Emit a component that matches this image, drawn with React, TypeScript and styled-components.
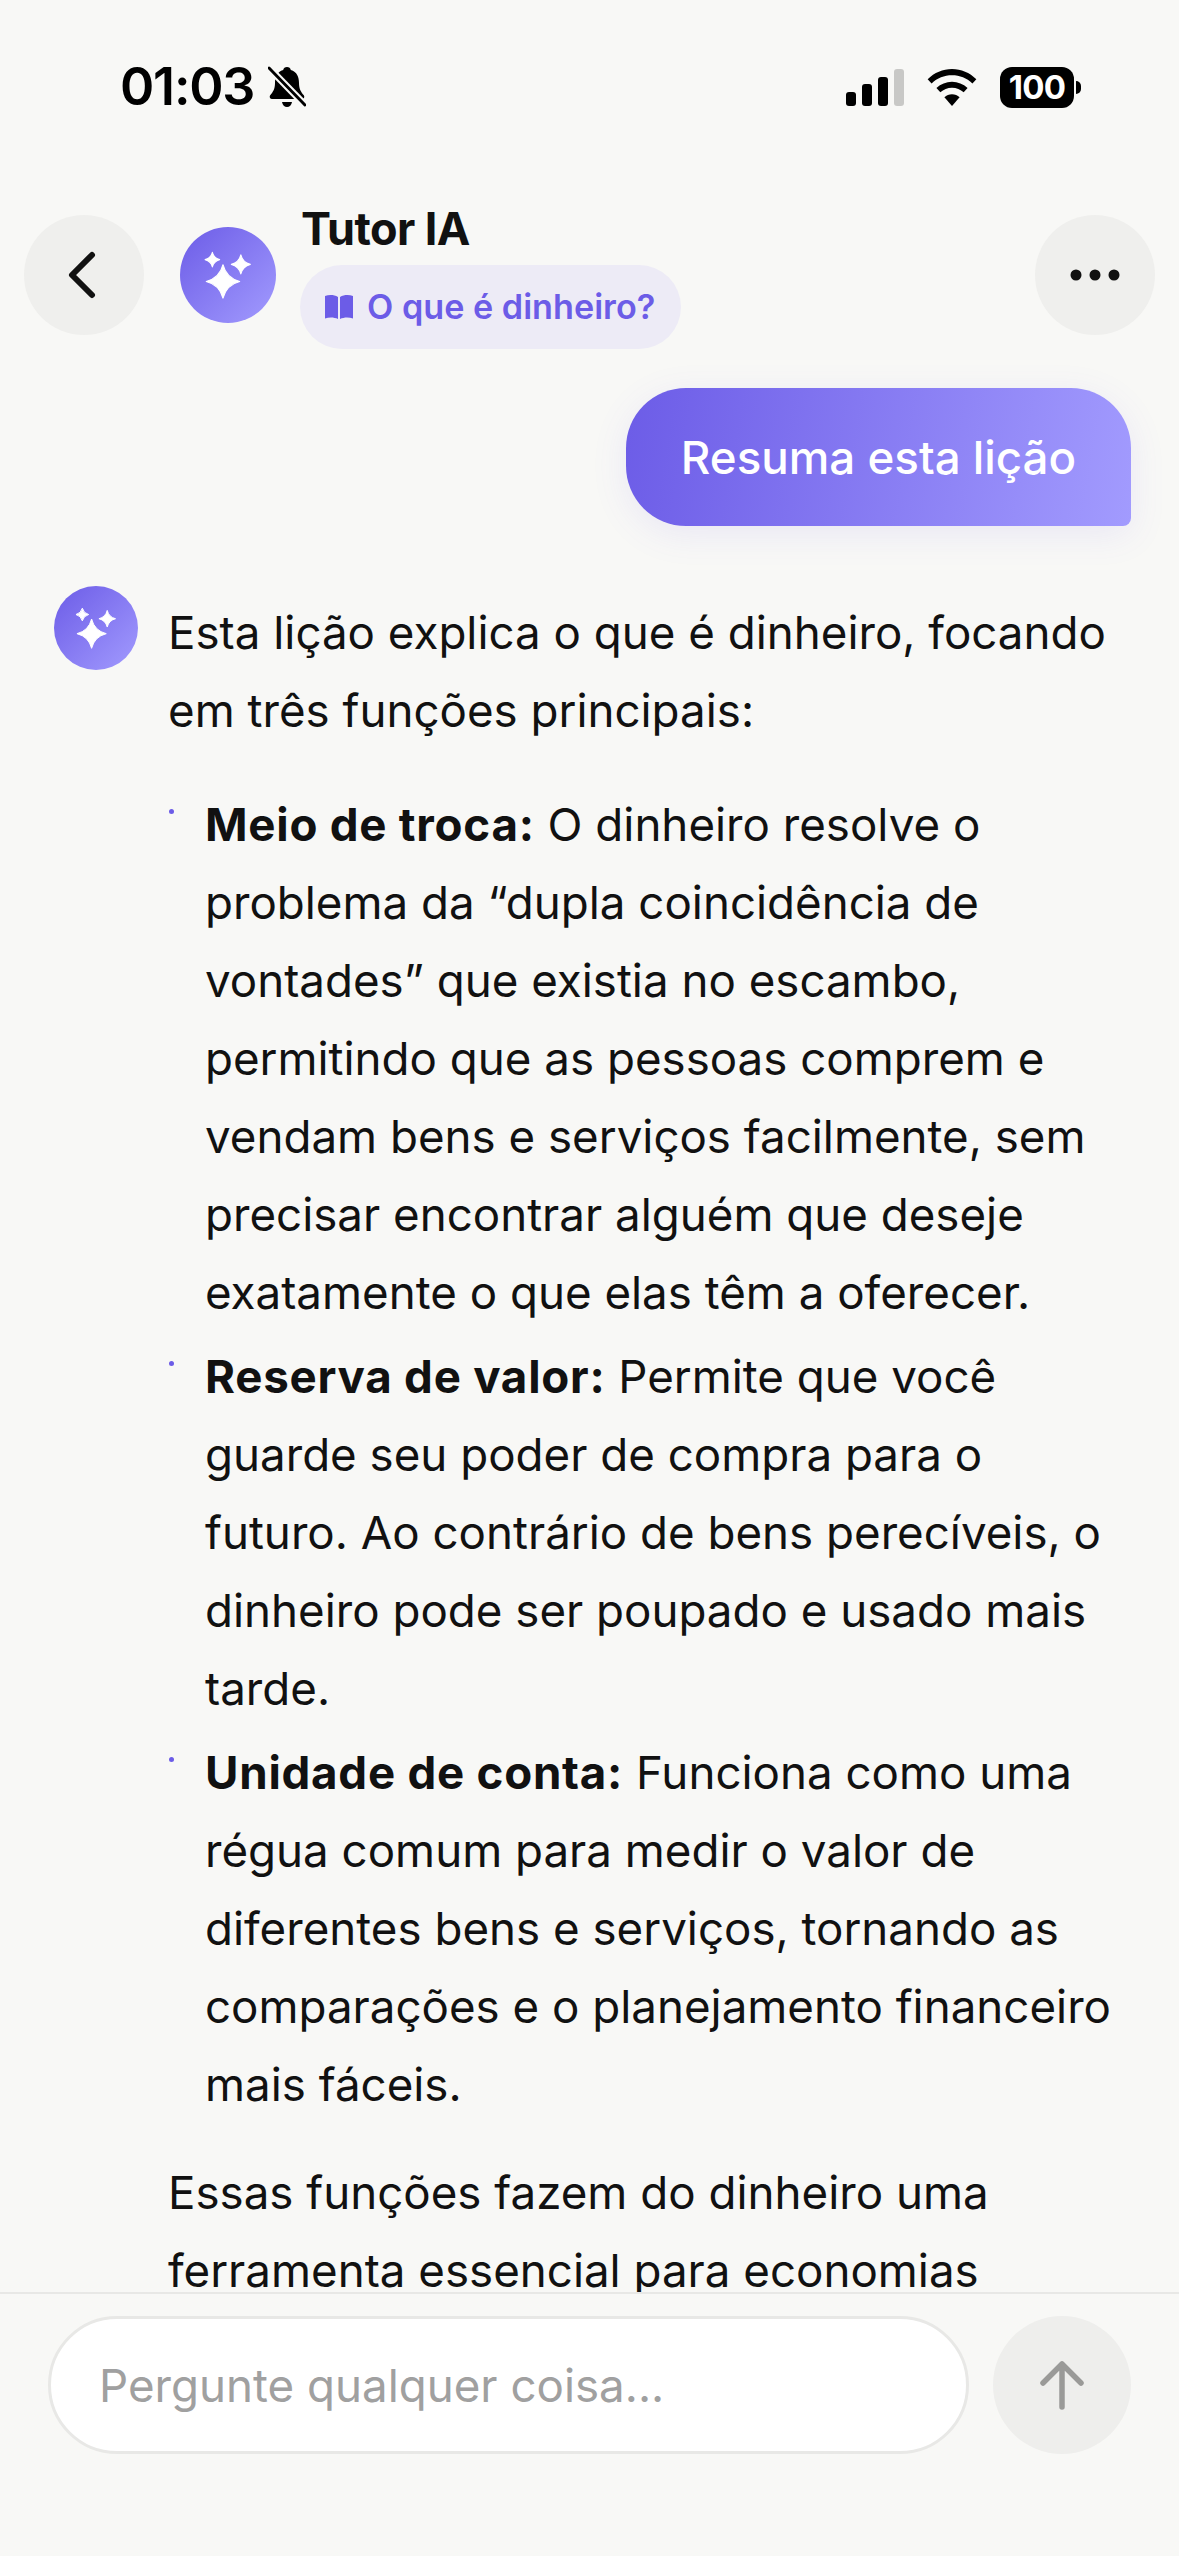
import React from "react";
import styled, { createGlobalStyle } from "styled-components";

const Global = createGlobalStyle`
	html, body {
		margin: 0;
		padding: 0;
		background: #f8f8f6;
	}
	* {
		box-sizing: border-box;
	}
`;

const Screen = styled.div`
	position: relative;
	width: 1179px;
	height: 2556px;
	overflow: hidden;
	display: flex;
	flex-direction: column;
	background: #f8f8f6;
	color: #111;
	font-family: Inter, "Noto Sans", sans-serif;
`;

const StatusBar = styled.div`
	height: 202px;
	flex-shrink: 0;
	padding: 57px 105px 0 120px;
	display: flex;
	justify-content: space-between;
	align-items: flex-start;
`;

const StatusLeft = styled.div`
	display: flex;
	align-items: center;
	gap: 14px;
	font-size: 52px;
	line-height: 60px;
	font-weight: 600;
	letter-spacing: -1.2px;
	color: #000;
`;

const StatusRight = styled.div`
	display: flex;
	align-items: center;
	gap: 23px;
	height: 60px;
`;

const Battery = styled.div`
	position: relative;
	width: 74px;
	height: 41px;
	border-radius: 12px;
	background: #000;
	color: #fff;
	font-size: 33px;
	font-weight: 700;
	display: flex;
	align-items: center;
	justify-content: center;
	letter-spacing: -0.8px;

	&::after {
		content: "";
		position: absolute;
		right: -7px;
		top: 14px;
		width: 5px;
		height: 13px;
		border-radius: 0 5px 5px 0;
		background: #000;
	}
`;

const Header = styled.div`
	display: flex;
	align-items: center;
	padding: 0 24px;
	height: 145px;
	flex-shrink: 0;
`;

const RoundButton = styled.div`
	width: 120px;
	height: 120px;
	border-radius: 50%;
	background: #efefed;
	display: flex;
	align-items: center;
	justify-content: center;
	flex-shrink: 0;
`;

const BackIcon = styled.svg`
	margin-right: 5px;
`;

const Avatar = styled.div<{ $size: number }>`
	width: ${(p) => p.$size}px;
	height: ${(p) => p.$size}px;
	border-radius: 50%;
	background: linear-gradient(135deg, #6c5ce7, #a29bfe);
	display: flex;
	align-items: center;
	justify-content: center;
	flex-shrink: 0;
`;

const HeaderAvatar = styled(Avatar)`
	margin-left: 36px;
`;

const TitleBlock = styled.div`
	flex: 1;
	margin-left: 24px;
	display: flex;
	flex-direction: column;
	align-items: flex-start;
	margin-top: 2px;
`;

const Title = styled.div`
	font-size: 45px;
	line-height: 52px;
	font-weight: 700;
	letter-spacing: -0.6px;
	margin-left: 1px;
`;

const LessonPill = styled.div`
	margin-top: 10px;
	height: 84px;
	padding: 0 26px 0 24px;
	border-radius: 42px;
	background: #edebf6;
	color: #6c5ce7;
	display: flex;
	align-items: center;
	gap: 13px;
	font-size: 34.200px;
	font-weight: 600;
`;

const Conversation = styled.div`
	flex: 1;
	min-height: 0;
	overflow: hidden;
	padding: 41px 54px 0 54px;
	display: flex;
	flex-direction: column;
`;

const UserBubble = styled.div`
	align-self: flex-end;
	flex-shrink: 0;
	margin-right: -6px;
	height: 138px;
	width: 505px;
	display: flex;
	align-items: center;
	justify-content: center;
	border-radius: 60px 60px 8px 60px;
	background: linear-gradient(100deg, #6c5ce7, #a29bfe);
	color: #fff;
	font-size: 45.700px;
	font-weight: 500;
	box-shadow: 0 8px 36px rgba(108, 92, 231, 0.1);
`;

const AnswerRow = styled.div`
	margin-top: 60px;
	flex-shrink: 0;
	display: flex;
	align-items: flex-start;
	gap: 30px;
`;

const Answer = styled.div`
	flex: 1;
	font-size: 45.700px;
	line-height: 78px;
	margin-top: 8px;
`;

const Paragraph = styled.p`
	margin: 0;
`;

const List = styled.ul`
	list-style: none;
	margin: 36px 0 30px;
	padding: 0 0 0 37px;
`;

const Item = styled.li`
	position: relative;
	margin-bottom: 6px;

	&::before {
		content: "";
		position: absolute;
		left: -36px;
		top: 23px;
		width: 5px;
		height: 5px;
		border-radius: 50%;
		background: #6c5ce7;
	}

	strong {
		font-weight: 700;
		letter-spacing: 0.75px;
	}
`;

const Composer = styled.div`
	height: 264px;
	flex-shrink: 0;
	border-top: 2px solid #e8e8e6;
	padding: 22px 48px 0 48px;
	display: flex;
	align-items: flex-start;
	gap: 24px;
	background: #f8f8f6;
`;

const InputBox = styled.div`
	flex: 1;
	height: 138px;
	border-radius: 69px;
	background: #fff;
	border: 3px solid #e8e8e6;
	padding: 0 48px;
	display: flex;
	align-items: center;
	font-size: 45.700px;
	color: #a0a0a0;
`;

const SendButton = styled.div`
	width: 138px;
	height: 138px;
	border-radius: 50%;
	background: #eeeeec;
	display: flex;
	align-items: center;
	justify-content: center;
	flex-shrink: 0;
`;

const star = (cx: number, cy: number, r: number) => {
	const k = r * 0.2;
	return `M${cx} ${cy - r}Q${cx + k} ${cy - k} ${cx + r} ${cy}Q${cx + k} ${cy + k} ${cx} ${cy + r}Q${cx - k} ${cy + k} ${cx - r} ${cy}Q${cx - k} ${cy - k} ${cx} ${cy - r}Z`;
};

const Sparkles = ({ size }: { size: number }) => (
	<svg width={size} height={size} viewBox="0 0 43 43" fill="#fff" stroke="#fff" strokeWidth="1" strokeLinejoin="round">
		<path d={star(17, 27.300, 15)} />
		<path d={star(7.500, 7.700, 6.500)} />
		<path d={star(33, 12, 8.500)} />
	</svg>
);

const App = () => (
	<Screen>
		<Global />
		<StatusBar>
			<StatusLeft>
				01:03
				<svg width="38" height="44" viewBox="0 0 38 44">
					<path d="M19 2c2 0 3.500 1.300 3.800 3C29 6.800 31 12 31 18c0 6 2 9 5 12.500.8 1.500 0 3.500-2 3.500H4c-2 0-2.800-2-2-3.500C5 27 7 24 7 18c0-6 2-11.200 8.200-13C15.500 3.300 17 2 19 2z" fill="#000" />
					<path d="M14 37h10c-.5 3-2.500 5-5 5s-4.500-2-5-5z" fill="#000" />
					<path d="M1 3l36 37" stroke="#f8f8f6" strokeWidth="7" />
					<path d="M1 3l36 37" stroke="#000" strokeWidth="3" strokeLinecap="round" />
				</svg>
			</StatusLeft>
			<StatusRight>
				<svg width="58" height="37" viewBox="0 0 58 37">
					<rect x="0" y="23" width="10" height="14" rx="3" fill="#000" />
					<rect x="16" y="15" width="10" height="22" rx="3" fill="#000" />
					<rect x="32" y="8" width="10" height="29" rx="3" fill="#000" />
					<rect x="48" y="0" width="10" height="37" rx="3" fill="#c8c8c6" />
				</svg>
				<svg width="50" height="37" viewBox="0 0 50 38" fill="#000">
					<path d="M25 0c9.500 0 18 3.700 25 10.500l-4 4.500C40 9.200 33 6.500 25 6.500S10 9.200 4 15L0 10.500C7 3.700 15.500 0 25 0z" />
					<path d="M25 13c6 0 11.500 2.300 16 6.500L37 24c-3.300-3-7.400-4.700-12-4.700S16.300 21 13 24l-4-4.500C13.500 15.300 19 13 25 13z" />
					<path d="M25 26c3 0 5.700 1 7.800 3L25 38l-7.800-9c2.100-2 4.800-3 7.800-3z" />
				</svg>
				<Battery>100</Battery>
			</StatusRight>
		</StatusBar>
		<Header>
			<RoundButton>
				<BackIcon width="28" height="48" viewBox="0 0 28 48" fill="none">
					<path d="M24 4L4 24l20 20" stroke="#111" strokeWidth="6" strokeLinecap="round" strokeLinejoin="round" />
				</BackIcon>
			</RoundButton>
			<HeaderAvatar $size={96}>
				<Sparkles size={48} />
			</HeaderAvatar>
			<TitleBlock>
				<Title>Tutor IA</Title>
				<LessonPill>
					<svg width="30" height="26" viewBox="0 0 28 26" fill="#6c5ce7">
						<path d="M0 2c4-1.500 9-1.500 13 1v22C9 23 4 23 0 24.500V2z" />
						<path d="M28 2c-4-1.500-9-1.500-13 1v22c4-2 9-2 13-.5V2z" />
					</svg>
					O que é dinheiro?
				</LessonPill>
			</TitleBlock>
			<RoundButton>
				<svg width="50" height="12" viewBox="0 0 50 12" fill="#111">
					<circle cx="6" cy="6" r="5.500" />
					<circle cx="25" cy="6" r="5.500" />
					<circle cx="44" cy="6" r="5.500" />
				</svg>
			</RoundButton>
		</Header>
		<Conversation>
			<UserBubble>Resuma esta lição</UserBubble>
			<AnswerRow>
				<Avatar $size={84}>
					<Sparkles size={42} />
				</Avatar>
				<Answer>
					<Paragraph>Esta lição explica o que é dinheiro, focando em três funções principais:</Paragraph>
					<List>
						<Item>
							<strong>Meio de troca:</strong> O dinheiro resolve o problema da “dupla coincidência de vontades” que existia no escambo, permitindo que as pessoas comprem e vendam bens e serviços facilmente, sem precisar encontrar alguém que deseje exatamente o que elas têm a oferecer.
						</Item>
						<Item>
							<strong>Reserva de valor:</strong> Permite que você guarde seu poder de compra para o futuro. Ao contrário de bens perecíveis, o dinheiro pode ser poupado e usado mais tarde.
						</Item>
						<Item>
							<strong>Unidade de conta:</strong> Funciona como uma régua comum para medir o valor de diferentes bens e serviços, tornando as comparações e o planejamento financeiro mais fáceis.
						</Item>
					</List>
					<Paragraph>Essas funções fazem do dinheiro uma ferramenta essencial para economias modernas.</Paragraph>
				</Answer>
			</AnswerRow>
		</Conversation>
		<Composer>
			<InputBox>Pergunte qualquer coisa...</InputBox>
			<SendButton>
				<svg width="46" height="50" viewBox="0 0 46 50" fill="none">
					<path d="M23 47V4M4 23L23 4l19 19" stroke="#9a9a98" strokeWidth="5.500" strokeLinecap="round" strokeLinejoin="round" />
				</svg>
			</SendButton>
		</Composer>
	</Screen>
);

export default App;
